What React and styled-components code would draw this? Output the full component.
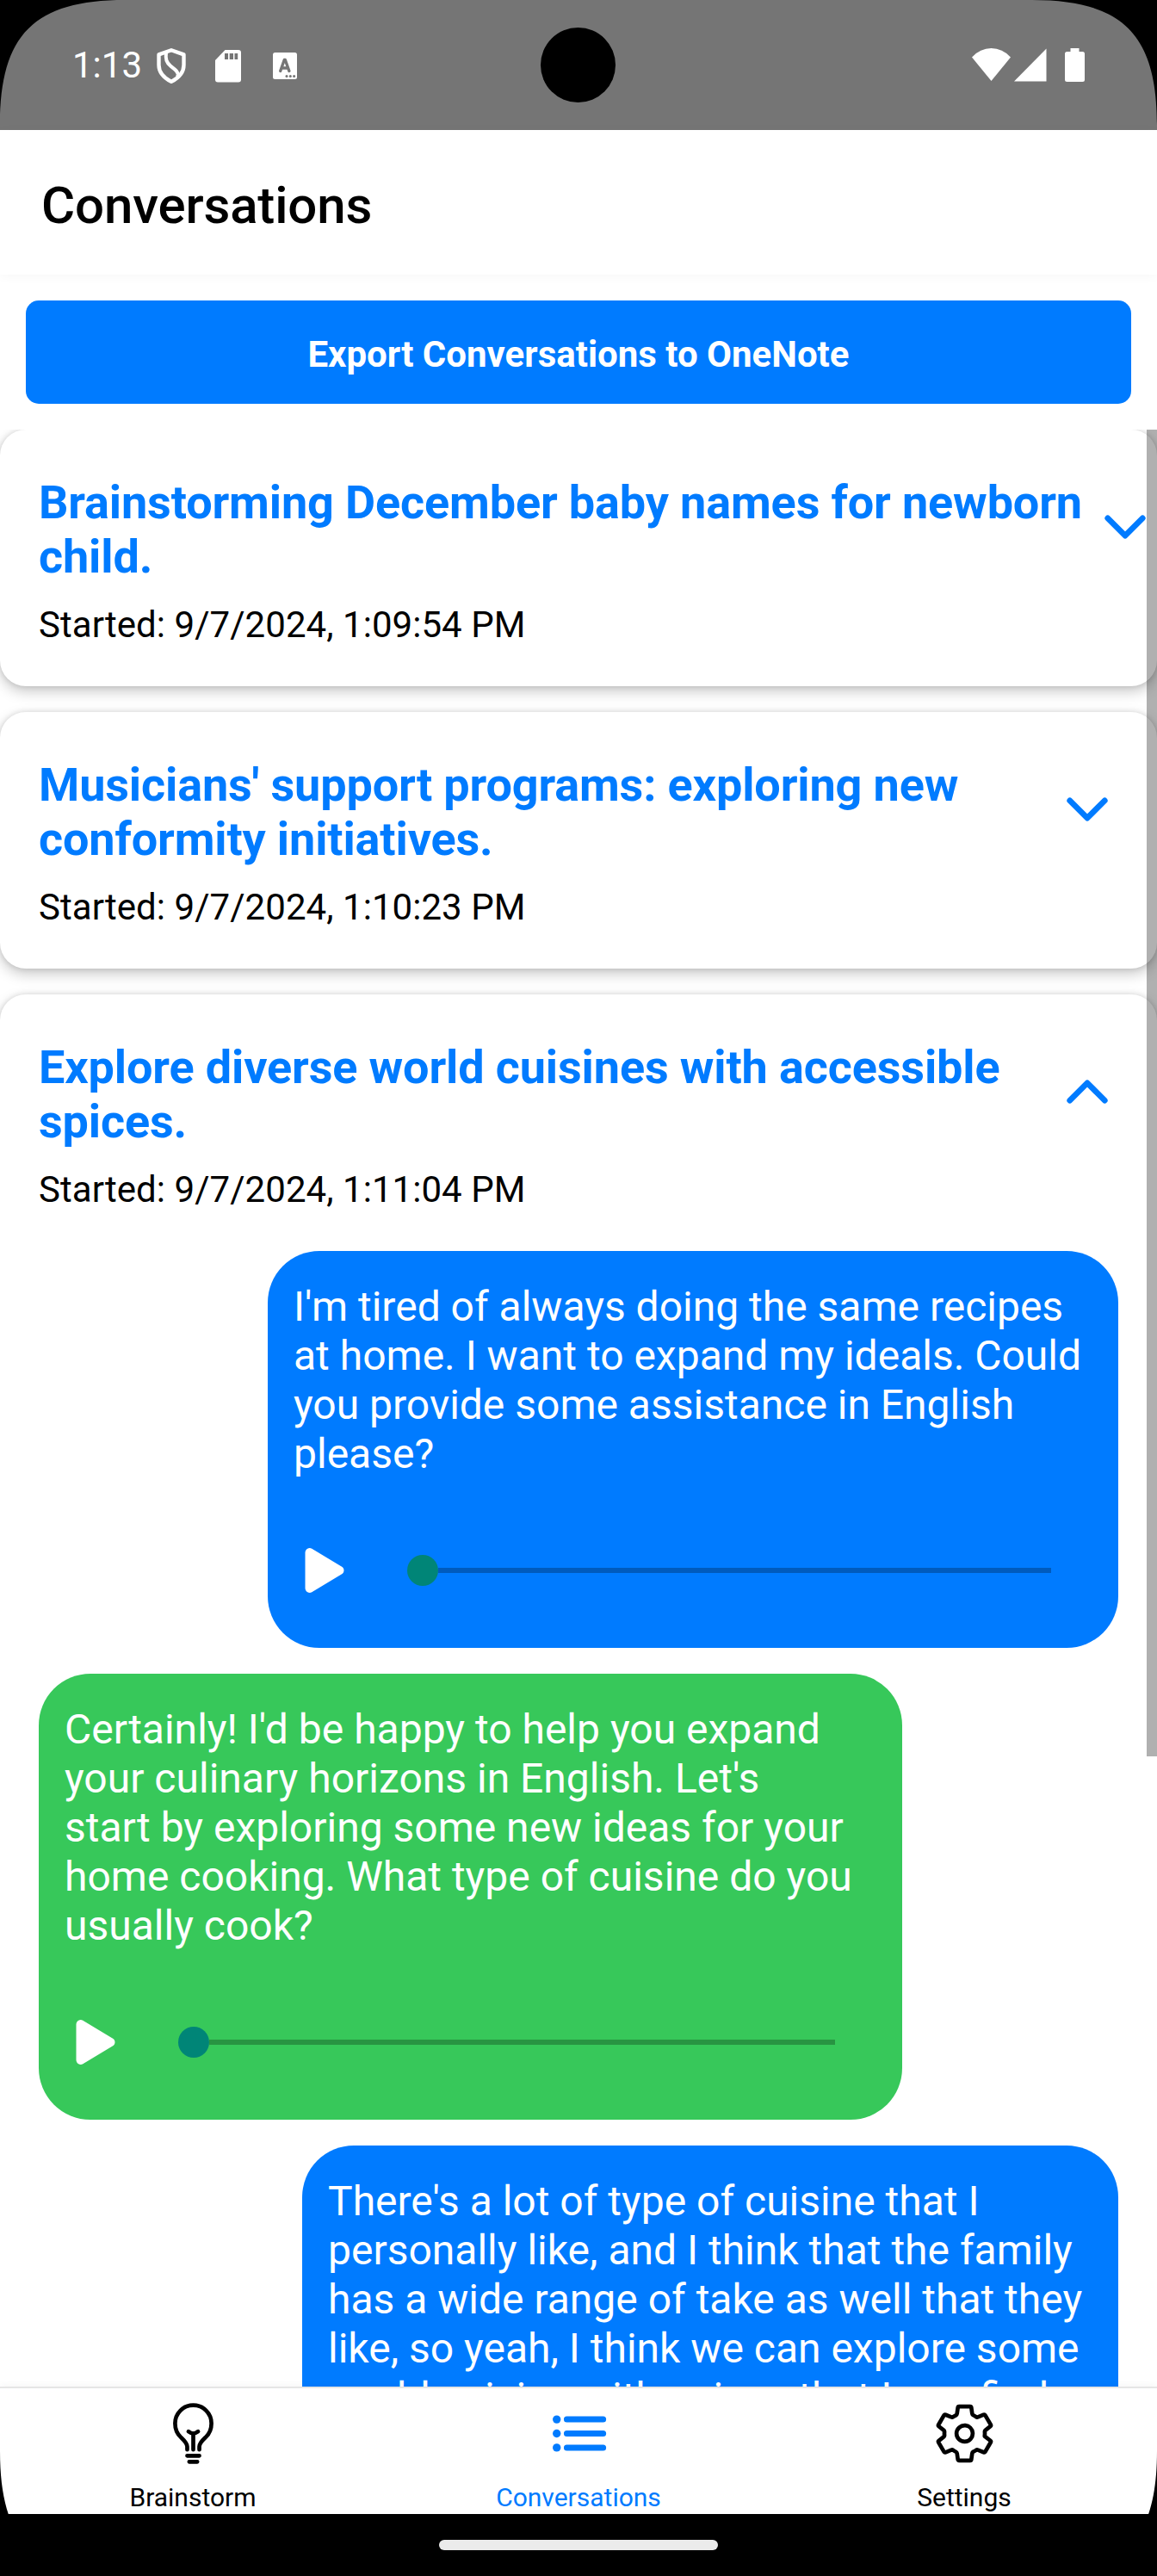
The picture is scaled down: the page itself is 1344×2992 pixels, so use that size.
import React from "react";
import styled, { createGlobalStyle } from "styled-components";
import { IoBulbOutline, IoSettingsOutline, IoPlay, IoChevronDown, IoChevronUp } from "react-icons/io5";

const Global = createGlobalStyle`
  *{box-sizing:border-box}
  body{margin:0;background:#000;font-family:Roboto,"Noto Sans",sans-serif;overflow:hidden}
  svg{display:block;flex:none}
`;
const Phone = styled.div`width:1344px;height:2992px;background:#000;display:flex;flex-direction:column;overflow:hidden;position:relative;`;
const Screen = styled.div`height:2920px;background:#fff;display:flex;flex-direction:column;overflow:hidden;`;
const StatusBar = styled.div`height:151px;flex:none;background:#757575;color:#fff;display:flex;justify-content:space-between;padding:0 82px 0 84px;`;
const Side = styled.div`display:flex;align-items:center;`;
const Clock = styled.span`width:96px;font-size:42px;line-height:151px;`;
const Camera = styled.div`position:absolute;left:628px;top:32px;width:87px;height:87px;border-radius:50%;background:#000;`;
const Corners = styled.svg`position:absolute;left:0;top:0;pointer-events:none;`;
const Header = styled.header`height:168px;flex:none;display:flex;align-items:center;padding:7px 48px 0;background:#fff;box-shadow:0 2px 12px rgba(0,0,0,.035);`;
const HeaderTitle = styled.h1`margin:0;font-size:60px;font-weight:500;line-height:70px;letter-spacing:-.15px;`;
const ExportButton = styled.button`margin:30px;height:120px;flex:none;border:0;border-radius:15px;background:#007bff;color:#fff;font:700 42px/49px Roboto,sans-serif;padding:4px 0 0;`;
const List = styled.main`flex:1;min-height:0;overflow:hidden;position:relative;display:flex;flex-direction:column;gap:30px;background:#fff;`;
const Scrollbar = styled.div`position:absolute;right:0;top:0;width:12px;height:1541px;background:rgba(0,0,0,.31);`;
const Card = styled.section`flex:none;border-radius:30px;background:#fff;padding:46px 45px 45px;box-shadow:0 6px 16px rgba(0,0,0,.22),0 0 6px rgba(0,0,0,.12);`;
const CardHead = styled.div`display:flex;align-items:center;justify-content:space-between;height:134px;margin-right:${p => p.$overflow ? "-44px" : "0"};`;
const Title = styled.h2`margin:0;padding-top:6px;font-size:54px;font-weight:700;line-height:63px;letter-spacing:-.14px;color:#007bff;white-space:pre;`;
const Started = styled.p`margin:22px 0 0;padding-bottom:2px;font-size:42px;line-height:49px;letter-spacing:.05px;color:#000;`;
const Messages = styled.div`display:flex;flex-direction:column;gap:30px;margin-top:45px;`;
const Bubble = styled.article`align-self:${p => p.$mine ? "flex-end" : "flex-start"};width:${p => p.$width}px;border-radius:60px;padding:36px 30px 54px;color:#fff;background:${p => p.$mine ? "#007bff" : "#37c85a"};`;
const Body = styled.p`margin:0;font-size:48px;line-height:57px;white-space:pre;`;
const Player = styled.div`display:flex;align-items:center;gap:30px;height:72px;margin-top:71px;`;
const Slider = styled.div`flex:1;padding:0 48px;display:flex;align-items:center;`;
const Thumb = styled.div`width:36px;height:36px;margin-left:-18px;border-radius:50%;background:#008577;flex:none;`;
const Track = styled.div`flex:1;height:6px;background:rgba(0,0,0,.26);`;
const Tabs = styled.nav`height:148px;flex:none;border-top:2px solid #e6e6e6;background:#fff;display:flex;position:relative;box-shadow:0 -2px 8px rgba(0,0,0,.04);`;
const Tab = styled.div`flex:1;display:flex;flex-direction:column;align-items:center;padding-top:15px;color:${p => p.$active ? "#007bff" : "#000"};`;
const TabLabel = styled.span`font-size:30px;line-height:36px;margin-top:19px;`;
const HomeArea = styled.div`height:72px;display:flex;justify-content:center;padding-top:30px;`;
const HomePill = styled.div`width:324px;height:12px;border-radius:6px;background:#ebebeb;`;

const conversations = [
  { title: "Brainstorming December baby names for newborn\nchild.", started: "9/7/2024, 1:09:54 PM", overflow: true },
  { title: "Musicians' support programs: exploring new\nconformity initiatives.", started: "9/7/2024, 1:10:23 PM" },
  {
    title: "Explore diverse world cuisines with accessible\nspices.", started: "9/7/2024, 1:11:04 PM", open: true,
    messages: [
      { mine: true, width: 988, text: "I'm tired of always doing the same recipes\nat home. I want to expand my ideals. Could\nyou provide some assistance in English\nplease?" },
      { mine: false, width: 1003, text: "Certainly! I'd be happy to help you expand\nyour culinary horizons in English. Let's\nstart by exploring some new ideas for your\nhome cooking. What type of cuisine do you\nusually cook?" },
      { mine: true, width: 948, text: "There's a lot of type of cuisine that I\npersonally like, and I think that the family\nhas a wide range of take as well that they\nlike, so yeah, I think we can explore some\nworld cuisine with spices that I can find" },
    ],
  },
];

function StatusIcons() {
  return (
    <svg width="170" height="60" viewBox="180 45 170 60">
      <path d="M199 57.200l14.500 5.200v12c0 8-6 15-14.500 19.500-8.500-4.500-14.500-11.500-14.500-19.500v-12z" fill="none" stroke="#fff" strokeWidth="4.400" strokeLinejoin="round" />
      <path d="M193 60c-1 8 .5 11.500 5 15.500s9 6 8.700 10.500q-.2 1.500-1 2.500" fill="none" stroke="#fff" strokeWidth="4" />
      <path d="M261.500 57h15.500q3 0 3 3v31.500q0 3-3 3h-24q-3 0-3-3V69z" fill="#fff" />
      <path d="M261 61h4v7h-4zM266.700 61h4.300v7h-4.300zM272.500 61h3.700v7h-3.700z" fill="#757575" />
      <rect x="317" y="60" width="28" height="31" rx="2.500" fill="#fff" />
      <path d="M325.700 81.500l4.600-13h1l4.600 13M327.500 78h7" fill="none" stroke="#757575" strokeWidth="3.400" strokeLinecap="round" strokeLinejoin="round" />
      <circle cx="333" cy="87.400" r="1.500" fill="#757575" />
      <circle cx="337.300" cy="87.400" r="1.500" fill="#757575" />
      <circle cx="341.600" cy="87.400" r="1.500" fill="#757575" />
    </svg>
  );
}
function SignalIcons() {
  return (
    <svg width="134" height="60" viewBox="1128 45 134 60">
      <path d="M1129 65.500q9.500-10.500 22.500-10.500t22.500 10.500L1151.500 93z" fill="#fff" />
      <path d="M1178 93.500h37.500V55.500z" fill="#fff" />
      <path d="M1243.500 55h10v4h4q2.500 0 2.500 2.500v30q0 2.500-2.500 2.500h-18q-2.500 0-2.500-2.500v-30q0-2.500 2.500-2.500h4z" fill="#fff" />
    </svg>
  );
}
function ListIcon() {
  return (
    <svg width="75" height="75" viewBox="0 0 512 512">
      <path d="M160 144h288M160 256h288M160 368h288" fill="none" stroke="currentColor" strokeWidth="48" strokeLinecap="round" />
      <circle cx="80" cy="144" r="32" fill="currentColor" />
      <circle cx="80" cy="256" r="32" fill="currentColor" />
      <circle cx="80" cy="368" r="32" fill="currentColor" />
    </svg>
  );
}
function Message({ mine, width, text }) {
  return (
    <Bubble $mine={mine} $width={width}>
      <Body>{text}</Body>
      <Player><IoPlay size={72} /><Slider><Thumb /><Track /></Slider></Player>
    </Bubble>
  );
}
export default function App() {
  return (
    <Phone>
      <Global />
      <Screen>
        <StatusBar>
          <Side><Clock>1:13</Clock><StatusIcons /></Side>
          <Side><SignalIcons /></Side>
        </StatusBar>
        <Header><HeaderTitle>Conversations</HeaderTitle></Header>
        <ExportButton>Export Conversations to OneNote</ExportButton>
        <List>
          {conversations.map(c => (
            <Card key={c.started}>
              <CardHead $overflow={c.overflow}>
                <Title>{c.title}</Title>
                {c.open ? <IoChevronUp size={72} color="#007bff" /> : <IoChevronDown size={72} color="#007bff" />}
              </CardHead>
              <Started>Started: {c.started}</Started>
              {c.messages && <Messages>{c.messages.map(m => <Message key={m.text} {...m} />)}</Messages>}
            </Card>
          ))}
          <Scrollbar />
        </List>
        <Tabs>
          <Tab><IoBulbOutline size={75} /><TabLabel>Brainstorm</TabLabel></Tab>
          <Tab $active><ListIcon /><TabLabel>Conversations</TabLabel></Tab>
          <Tab><IoSettingsOutline size={75} /><TabLabel>Settings</TabLabel></Tab>
        </Tabs>
      </Screen>
      <HomeArea><HomePill /></HomeArea>
      <Camera />
      <Corners width="1344" height="2992">
        <path d="M0 0H145C40 0 0 40 0 145zM1344 0H1199C1304 0 1344 40 1344 145zM0 2992V2847C0 2952 40 2992 145 2992zM1344 2992V2847C1344 2952 1304 2992 1199 2992z" fill="#000" />
      </Corners>
    </Phone>
  );
}
